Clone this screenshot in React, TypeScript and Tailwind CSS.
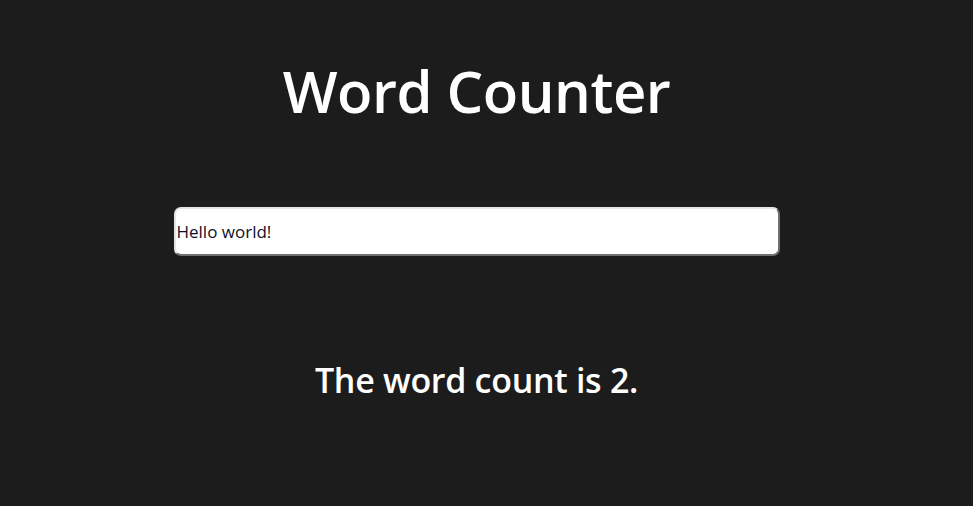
import { useState } from "react";

export default function App() {
  const [text, setText] = useState("Hello world!");
  const count = text.trim() === "" ? 0 : text.trim().split(/\s+/).length;

  return (
    <div className="min-h-[506px] w-full bg-[#1c1c1c] font-['Open_Sans',sans-serif] text-white">
      <div className="flex w-[953px] flex-col items-center">
        <h1 className="mt-[51px] text-[58px] font-semibold leading-[80px] tracking-[-0.5px]">
          Word Counter
        </h1>
        <input
          value={text}
          onChange={(e) => setText(e.target.value)}
          className="mt-[76px] h-[49px] w-[606px] rounded-[7px] border-2 border-t-[#e5e5e5] border-l-[#e5e5e5] border-b-[#707070] border-r-[#707070] bg-white px-[1px] text-[17px] text-[#10102a] outline-none"
        />
        <h2 className="mt-[100px] text-[34px] font-semibold leading-[48px] tracking-[-0.3px]">
          The word count is {count}.
        </h2>
      </div>
    </div>
  );
}
